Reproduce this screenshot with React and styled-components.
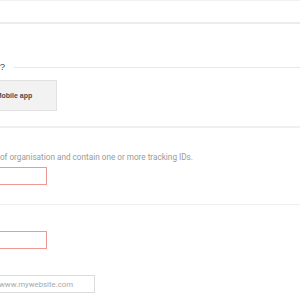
import React from "react";
import styled, { createGlobalStyle } from "styled-components";

const Global = createGlobalStyle`
  html, body { margin: 0; padding: 0; background: #ffffff; overflow: hidden; }
  body { font-family: Roboto, "Liberation Sans", Arial, sans-serif; }
  * { box-sizing: border-box; }
`;

/* The form is scrolled horizontally: its left part lies off the view. */
const Page = styled.div`
  width: 460px;
  margin-left: -160px;
`;

const Header = styled.div`
  box-sizing: content-box;
  height: 21px;
  border-top: 1px solid #f1f1f1;
  border-bottom: 2px solid #ececec;
`;

const TrackSection = styled.section`
  padding: 37px 0 15px 0;
`;

const HeadingRow = styled.div`
  display: flex;
  align-items: center;
  height: 12px;
`;

const HeadingText = styled.h2`
  flex: 0 0 165px;
  margin: 0;
  text-align: right;
  white-space: nowrap;
  font-family: "Liberation Sans", Arial, sans-serif;
  font-size: 9.5px;
  line-height: 12px;
  font-weight: normal;
  color: #4a4a4a;
`;

const Rule = styled.div`
  flex: 1;
  height: 1px;
  margin-left: 9px;
  background: #e8e8e8;
`;

const TileRow = styled.div`
  display: flex;
  gap: 6px;
  margin-top: 7px;
  padding-left: 39px;
`;

const Tile = styled.button`
  width: 86px;
  height: 31px;
  padding: 0;
  border: 1px solid #e2e2e2;
  background: #f2f2f2;
  font-family: "Liberation Sans", Arial, sans-serif;
  font-size: 7px;
  font-weight: bold;
  color: #4a4a4a;
  text-align: center;
`;

const Separator = styled.div`
  height: 2px;
  background: #f0f0f0;
`;

const AccountSection = styled.section`
  padding: 24px 0 19px 0;
`;

const Description = styled.p`
  width: 353px;
  margin: 0;
  text-align: right;
  white-space: nowrap;
  font-family: Roboto, "Liberation Sans", sans-serif;
  font-size: 8.2px;
  line-height: 10px;
  color: #9a9a9a;
`;

const TextInput = styled.input`
  display: block;
  width: ${(p) => p.$width}px;
  height: 18px;
  margin: ${(p) => (p.$gap ? `${p.$gap}px 0 0 0` : "0")};
  padding: 0 0 0 6px;
  border: 1px solid ${(p) => (p.$error ? "#ec9a93" : "#dcdcdc")};
  background: #ffffff;
  outline: none;
  font-family: Roboto, "Liberation Sans", sans-serif;
  font-size: 7.8px;
  color: #444;
  &::placeholder { color: #a9a9a9; }
`;

const Divider = styled.div`
  height: 1px;
  background: #eeeeee;
`;

const PropertySection = styled.section`
  padding: 0;
`;

const Field = styled.div`
  margin-top: 8px;
  display: flex;
  flex-direction: column;
  gap: 6px;
`;

const Label = styled.label`
  font-family: "Liberation Sans", Arial, sans-serif;
  font-size: 8px;
  line-height: 12px;
  font-weight: bold;
  color: #333333;
`;

const UrlRow = styled.div`
  display: flex;
  gap: 2px;
`;

const Protocol = styled.select`
  width: 150px;
  height: 18px;
  border: 1px solid #dcdcdc;
  background: #f6f6f6;
  font-size: 7px;
`;

export default function App() {
  return (
    <>
      <Global />
      <Page>
        <Header />
        <TrackSection>
          <HeadingRow>
            <HeadingText>What would you like to track?</HeadingText>
            <Rule />
          </HeadingRow>
          <TileRow>
            <Tile>Website</Tile>
            <Tile>Mobile app</Tile>
          </TileRow>
        </TrackSection>
        <Separator />
        <AccountSection>
          <Description>
            Accounts are the top-most level of organisation and contain one or more tracking IDs.
          </Description>
          <TextInput $width={207} $gap={5} $error aria-label="Account Name" />
        </AccountSection>
        <Divider />
        <PropertySection>
          <Field>
            <Label>Website Name</Label>
            <TextInput $width={207} $error />
          </Field>
          <Field>
            <Label>Website URL</Label>
            <UrlRow>
              <Protocol defaultValue="http">
                <option value="http">http://</option>
              </Protocol>
              <TextInput $width={103} placeholder="www.mywebsite.com" />
            </UrlRow>
          </Field>
        </PropertySection>
      </Page>
    </>
  );
}
